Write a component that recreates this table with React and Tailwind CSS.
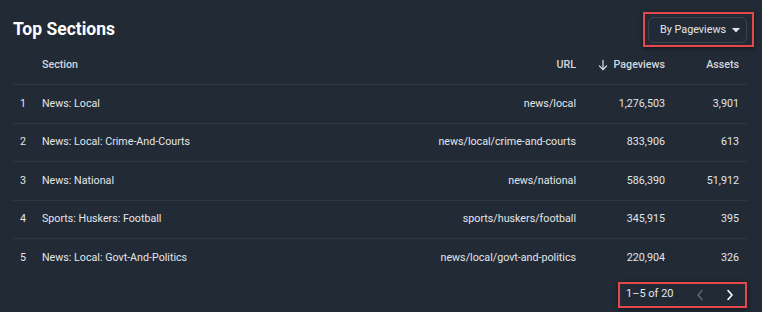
import React from 'react';

const rows = [
  { section: 'News: Local', url: 'news/local', views: '1,276,503', assets: '3,901' },
  { section: 'News: Local: Crime-And-Courts', url: 'news/local/crime-and-courts', views: '833,906', assets: '613' },
  { section: 'News: National', url: 'news/national', views: '586,390', assets: '51,912' },
  { section: 'Sports: Huskers: Football', url: 'sports/huskers/football', views: '345,915', assets: '395' },
  { section: 'News: Local: Govt-And-Politics', url: 'news/local/govt-and-politics', views: '220,904', assets: '326' },
];

function Caret() {
  return (
    <svg width="8" height="5" viewBox="0 0 8 5" className="ml-[6px]">
      <polygon points="0,0 8,0 4,4.5" fill="currentColor" />
    </svg>
  );
}

function DownArrow() {
  return (
    <svg width="10" height="12" viewBox="0 0 10 12" fill="none" stroke="currentColor"
      strokeWidth="1.3" strokeLinecap="round" strokeLinejoin="round" className="mr-[6px]">
      <path d="M5 1.5v9" />
      <path d="M1.5 7l3.5 3.5L8.5 7" />
    </svg>
  );
}

function Chevron({ dir }) {
  return (
    <svg width="8" height="12" viewBox="0 0 8 12" fill="none" stroke="currentColor"
      strokeWidth="1.6" strokeLinecap="round" strokeLinejoin="round">
      {dir === 'left' ? <polyline points="6,1.5 2,6 6,10.5" /> : <polyline points="2,1.5 6,6 2,10.5" />}
    </svg>
  );
}

export default function App() {
  return (
    <div
      className="w-[762px] h-[312px] bg-[#212a35] pl-[13px] pr-[15px] overflow-hidden text-[#e3e6ea]"
      style={{ fontFamily: 'Roboto, "Liberation Sans", sans-serif' }}
    >
      {/* Title row */}
      <div className="flex items-center justify-between pt-[17px]">
        <h1 className="text-[17.5px] leading-[22px] font-bold text-white -mt-[3px]">Top Sections</h1>
        <div className="relative">
          <button className="h-[26px] w-[99px] flex items-center pl-[11px] rounded-[6px] border border-[#3a4350] text-[10.8px] text-[#e5e7eb]">
            By Pageviews
            <Caret />
          </button>
          <div className="absolute -left-[5px] -right-[7px] -top-[5px] -bottom-[4px] border-2 border-[#e5474c] shadow-[0_1px_4px_rgba(0,0,0,0.5)] pointer-events-none" />
        </div>
      </div>

      {/* Table header */}
      <div className="flex items-center h-[42px] pt-[3px] border-b border-[#2e3743] text-[10.7px] font-medium text-[#d4d8de]">
        <div className="w-[29px]" />
        <div className="flex-1">Section</div>
        <div className="text-right">URL</div>
        <div className="w-[89px] flex items-center justify-end">
          <DownArrow />
          Pageviews
        </div>
        <div className="w-[74px] text-right">Assets</div>
        <div className="w-[8px]" />
      </div>

      {/* Rows */}
      {rows.map((r, i) => (
        <div
          key={r.url}
          className={`flex items-center h-[38.5px] text-[10.7px] ${i < rows.length - 1 ? 'border-b border-[#2e3743]' : ''}`}
        >
          <div className="w-[29px] pl-[7px]">{i + 1}</div>
          <div className="flex-1">{r.section}</div>
          <div className="text-right">{r.url}</div>
          <div className="w-[89px] text-right">{r.views}</div>
          <div className="w-[74px] text-right">{r.assets}</div>
          <div className="w-[8px]" />
        </div>
      ))}

      {/* Pagination */}
      <div className="flex justify-end mt-[4px]">
        <div className="flex items-center h-[26px] w-[129px] border-2 border-[#e5474c] shadow-[0_1px_4px_rgba(0,0,0,0.5)] pl-[6px] pr-[11px] text-[11px] text-[#e5e7eb]">
          <span>1–5 of 20</span>
          <span className="ml-auto text-[#5d6673]"><Chevron dir="left" /></span>
          <span className="ml-[22px] text-white"><Chevron dir="right" /></span>
        </div>
      </div>
    </div>
  );
}
